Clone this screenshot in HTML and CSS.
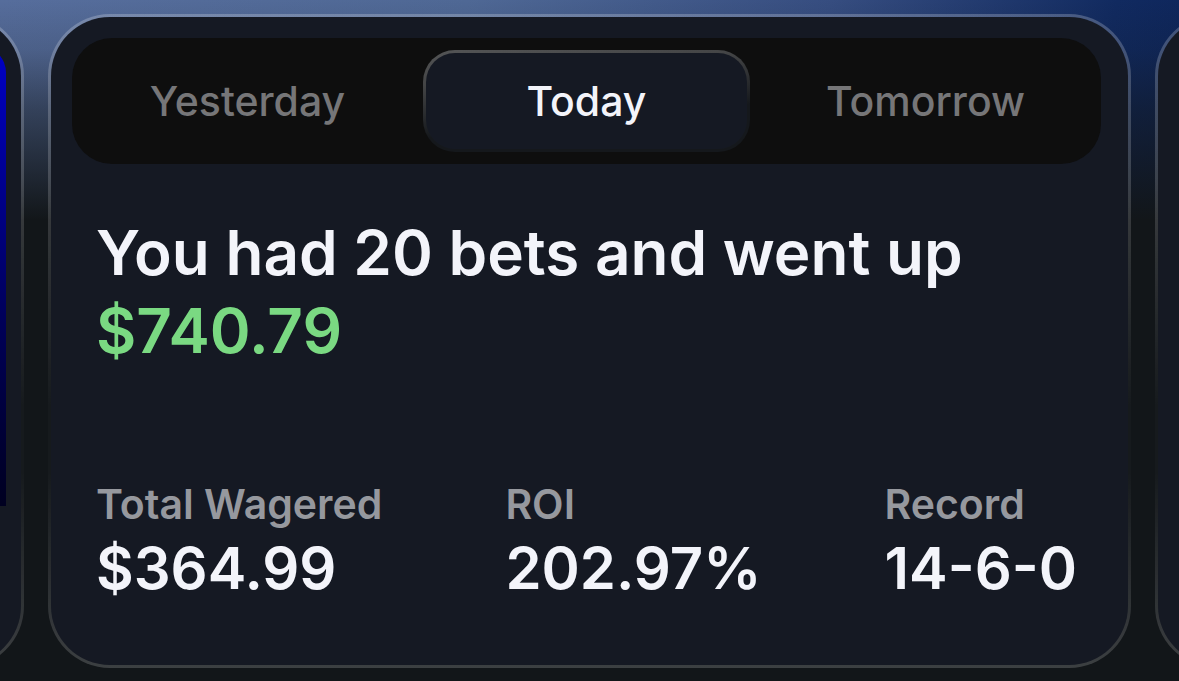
FILE: index.html
```html
<!DOCTYPE html>
<html lang="en">
<head>
  <meta charset="UTF-8">
  <meta name="viewport" content="width=device-width, initial-scale=1.0">
  <title>Bet Summary</title>
  <link rel="stylesheet" href="styles.css">
</head>
<body>
  <main class="carousel">
    <!-- Previous card -->
    <div class="card card-prev">
      <div class="cover"></div>
    </div>

    <!-- Daily summary -->
    <section class="card">
      <div class="tabs">
        <button type="button" class="tab">Yesterday</button>
        <button type="button" class="tab active">Today</button>
        <button type="button" class="tab">Tomorrow</button>
      </div>

      <div class="summary">
        <h1>You had 20 bets and went up <span class="profit">$740.79</span></h1>
        <dl class="stats">
          <div class="stat">
            <dt>Total Wagered</dt>
            <dd>$364.99</dd>
          </div>
          <div class="stat">
            <dt>ROI</dt>
            <dd>202.97%</dd>
          </div>
          <div class="stat">
            <dt>Record</dt>
            <dd>14-6-0</dd>
          </div>
        </dl>
      </div>
    </section>

    <!-- Next card -->
    <div class="card"></div>
  </main>
</body>
</html>
```
FILE: styles.css
```css
* {
  box-sizing: border-box;
}

body {
  margin: 0;
  min-height: 100vh;
  font-family: Inter, "Liberation Sans", sans-serif;
  color: #f3f4fa;
  background:
    linear-gradient(to bottom, rgba(18, 22, 25, 0) 0, rgba(18, 22, 25, 0.15) 50px, rgba(18, 22, 25, 0.5) 110px, #121619 220px),
    linear-gradient(100deg, #566d9c 0%, #4f6895 36%, #364d80 64%, #112a60 86%, #0a2156 100%);
}

.carousel {
  display: flex;
  justify-content: center;
  gap: 24px;
  padding: 14px 0 13px;
  overflow: hidden;
}

.card {
  flex: 0 0 calc(100% - 96px);
  display: flex;
  flex-direction: column;
  padding: 21px 27px 21px 21px;
  border: 3px solid transparent;
  border-radius: 62px;
  background:
    linear-gradient(#151923, #151923) padding-box,
    linear-gradient(to bottom, rgba(255, 255, 255, 0.22), rgba(255, 255, 255, 0.18) 25%, rgba(255, 255, 255, 0.02) 60%, rgba(255, 255, 255, 0.02) 70%, rgba(255, 255, 255, 0.18)) border-box;
}

.card-prev {
  padding: 28px 15px;
}

.cover {
  height: 461px;
  border-radius: 28px 28px 0 0;
  background: linear-gradient(to bottom, #0000c8, #000098 25%, #000058 60%, #000020);
}

.tabs {
  display: grid;
  grid-template-columns: repeat(3, 1fr);
  gap: 12px;
  padding: 12px;
  border-radius: 40px;
  background: #0e0e0e;
}

.tab {
  height: 102px;
  padding: 0;
  border: 3px solid transparent;
  border-radius: 32px;
  background: none;
  font-family: inherit;
  font-size: 41px;
  font-weight: 500;
  color: #767678;
  cursor: pointer;
}

.tab.active {
  color: #f3f4fa;
  background:
    linear-gradient(#151923, #151923) padding-box,
    linear-gradient(174deg, #545556, #444546 25%, #15181c 65%) border-box;
}

.summary {
  padding: 50px 24px 42px;
}

h1 {
  margin: 0;
  font-size: 62px;
  line-height: 78px;
  font-weight: 600;
}

.profit {
  display: block;
  color: #7ad982;
}

.stats {
  display: flex;
  justify-content: space-between;
  margin: 104px 0 0;
}

dt {
  font-size: 41px;
  line-height: 60px;
  font-weight: 600;
  color: #96989e;
}

dd {
  margin: 0;
  font-size: 58px;
  line-height: 68px;
  font-weight: 600;
}
```
